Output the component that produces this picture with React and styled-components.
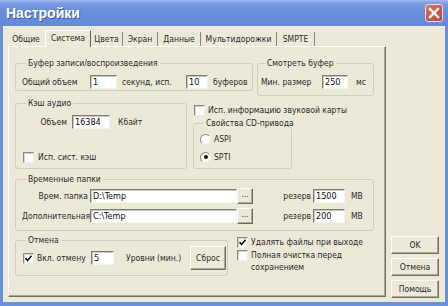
import React from 'react';
import styled, { createGlobalStyle } from 'styled-components';

const FONT = `"DejaVu Sans Condensed", "DejaVu Sans", "Liberation Sans", sans-serif`;

const GlobalStyle = createGlobalStyle`
  * { box-sizing: border-box; }
  html, body { margin: 0; padding: 0; background: #ece9d8; }
  body {
    font-family: ${FONT};
    font-stretch: condensed;
    font-size: 8.5px;
    color: #2b2b2b;
  }
`;

const Window = styled.div`
  width: 448px;
  height: 306px;
  display: flex;
  flex-direction: column;
  background: #6a8fdb;
`;

const TitleBar = styled.div`
  height: 26px;
  flex: none;
  display: flex;
  align-items: center;
  justify-content: space-between;
  padding: 0 5px 1px 6px;
  background: linear-gradient(#a3bdf0 0px, #7c9de4 3px, #6a8fdb 10px, #6589d8 100%);
`;

const Title = styled.span`
  font-family: "Liberation Sans", Arial, sans-serif;
  font-weight: bold;
  font-size: 14px;
  color: #fff;
  text-shadow: 1px 1px 0 #3a5ea8;
`;

const CloseBox = styled.div`
  width: 18px;
  height: 18px;
  border-radius: 3px;
  border: 1px solid #f2d6d0;
  background: linear-gradient(135deg, #d87a6c, #c4564a 60%, #b34a40);
  display: flex;
  align-items: center;
  justify-content: center;
`;

const Client = styled.div`
  flex: 1;
  margin: 0 3px 4px 3px;
  background: #ece9d8;
  display: flex;
  padding: 4px 0 0 5px;
`;

const Main = styled.div`
  width: 378px;
  display: flex;
  flex-direction: column;
`;

const TabStrip = styled.div`
  height: 16px;
  display: flex;
  align-items: flex-end;
`;

const Tab = styled.div`
  width: ${p => p.$w}px;
  height: ${p => (p.$active ? 17 : 14)}px;
  margin-bottom: ${p => (p.$active ? -1 : 0)}px;
  display: flex;
  align-items: center;
  justify-content: center;
  padding-bottom: ${p => (p.$active ? 2 : 0)}px;
  white-space: nowrap;
  background: #ece9d8;
  position: relative;
  z-index: ${p => (p.$active ? 1 : 0)};
  border-right: 1px solid ${p => (p.$sep ? '#85857a' : 'transparent')};
  ${p => p.$active && `
    border-top: 1px solid #ffffff;
    border-left: 1px solid #ffffff;
    border-right: 1px solid #5e5e56;
  `}
`;

const Panel = styled.div`
  height: 251px;
  border: 1px solid;
  border-color: #ffffff #716f64 #716f64 #ffffff;
  box-shadow: inset -1px -1px 0 #aca899;
  padding: 10px 0 0 6px;
  display: flex;
  flex-direction: column;
`;

const Row = styled.div`
  display: flex;
  align-items: ${p => p.$align || 'center'};
  height: ${p => (p.$h ? `${p.$h}px` : 'auto')};
  width: ${p => (p.$w ? `${p.$w}px` : 'auto')};
  flex: none;
  margin-top: ${p => p.$mt || 0}px;
  margin-left: ${p => p.$ml || 0}px;
`;

const Column = styled.div`
  display: flex;
  flex-direction: column;
  width: ${p => (p.$w ? `${p.$w}px` : 'auto')};
  margin-left: ${p => p.$ml || 0}px;
  margin-top: ${p => p.$mt || 0}px;
`;

const Group = styled.fieldset`
  margin: 0;
  margin-top: ${p => p.$mt || 0}px;
  min-width: 0;
  width: ${p => p.$w}px;
  height: ${p => p.$h}px;
  padding: ${p => p.$pt || 0}px 0 0 ${p => p.$pl || 6}px;
  border: 1px solid #d0cebf;
  border-radius: 3px;
`;

const Legend = styled.legend`
  padding: 0 2px;
  margin-left: 4px;
  line-height: 12px;
  font-size: 8.5px;
  white-space: nowrap;
  color: #2b2b2b;
`;

const Text = styled.span`
  display: inline-block;
  flex: none;
  white-space: nowrap;
  width: ${p => (p.$w ? `${p.$w}px` : 'auto')};
  text-align: ${p => (p.$right ? 'right' : 'left')};
  padding-left: ${p => p.$pl || 0}px;
  padding-right: ${p => p.$pr || 0}px;
  line-height: 12px;
`;

const Field = styled.div`
  flex: none;
  width: ${p => p.$w}px;
  height: 14px;
  background: #fff;
  border: 1px solid;
  border-color: #7f7d74 #f4f3ee #f4f3ee #7f7d74;
  box-shadow: inset 1px 1px 0 #c8c6bc;
  padding: 0 2px;
  line-height: 12px;
  font-size: 9px;
  color: #111;
  white-space: nowrap;
  overflow: hidden;
`;

const Button = styled.div`
  flex: none;
  width: ${p => p.$w}px;
  height: ${p => p.$h}px;
  display: flex;
  align-items: center;
  justify-content: center;
  background: #ece9d8;
  border: 1px solid;
  border-color: #ffffff #716f64 #716f64 #ffffff;
  box-shadow: inset -1px -1px 0 #aca899;
  font-size: ${p => p.$fs || 8.5}px;
  line-height: 1;
  color: #2b2b2b;
  padding-bottom: ${p => p.$pb || 0}px;
`;

const Box = styled.div`
  flex: none;
  width: 11px;
  height: 11px;
  margin-left: ${p => p.$ml || 0}px;
  margin-top: ${p => p.$mt || 0}px;
  background: #fff;
  border: 1px solid;
  border-color: #8d8b80 #f0efe8 #f0efe8 #8d8b80;
  box-shadow: inset 1px 1px 0 #d6d4ca;
  display: flex;
  align-items: center;
  justify-content: center;
`;

const RadioCircle = styled.div`
  flex: none;
  width: 11px;
  height: 11px;
  border-radius: 50%;
  background: #fff;
  border: 1px solid;
  border-color: #8d8b80 #eeede6 #eeede6 #8d8b80;
  display: flex;
  align-items: center;
  justify-content: center;
`;

const Dot = styled.div`
  width: 4px;
  height: 4px;
  border-radius: 50%;
  background: #111;
`;

const ButtonColumn = styled.div`
  width: 48px;
  margin-left: 5px;
  display: flex;
  flex-direction: column;
  justify-content: flex-end;
  gap: 4px;
  padding-bottom: 4px;
`;

const WrapText = styled.span`
  width: ${p => p.$w}px;
  margin-left: 3px;
  line-height: 12px;
`;

function CheckBox({ checked, ml, mt }) {
  return (
    <Box $ml={ml} $mt={mt}>
      {checked && (
        <svg width="7" height="7" viewBox="0 0 7 7">
          <path d="M0.5 3 L2.5 5.5 L6.5 0.8" fill="none" stroke="#111" strokeWidth="1.6" />
        </svg>
      )}
    </Box>
  );
}

function Radio({ checked }) {
  return <RadioCircle>{checked && <Dot />}</RadioCircle>;
}

const tabs = [
  { label: 'Общие', w: 37, sep: false },
  { label: 'Система', w: 46, active: true },
  { label: 'Цвета', w: 32, sep: true },
  { label: 'Экран', w: 35, sep: true },
  { label: 'Данные', w: 43, sep: true },
  { label: 'Мультидорожки', w: 76, sep: true },
  { label: 'SMPTE', w: 38, sep: true },
];

export default function App() {
  return (
    <>
      <GlobalStyle />
      <Window>
        <TitleBar>
          <Title>Настройки</Title>
          <CloseBox>
            <svg width="12" height="12" viewBox="0 0 12 12">
              <path d="M2 2 L10 10 M10 2 L2 10" stroke="#fff" strokeWidth="2.4" strokeLinecap="square" />
            </svg>
          </CloseBox>
        </TitleBar>
        <Client>
          <Main>
            <TabStrip>
              {tabs.map(t => (
                <Tab key={t.label} $w={t.w} $active={t.active} $sep={t.sep}>
                  {t.label}
                </Tab>
              ))}
            </TabStrip>
            <Panel>
              <Row $h={40} $align="flex-start">
                <Group $w={238} $h={34} $pt={6} $pl={6}>
                  <Legend>Буфер записи/воспроизведения</Legend>
                  <Row $h={14}>
                    <Text $w={68}>Общий объем</Text>
                    <Field $w={27}>1</Field>
                    <Text $w={69} $pl={5}>секунд, исп.</Text>
                    <Field $w={22}>10</Field>
                    <Text $pl={5}>буферов</Text>
                  </Row>
                </Group>
                <Column $ml={4}>
                  <Group $w={117} $h={39} $pt={6} $pl={3}>
                    <Legend>Смотреть буфер</Legend>
                    <Row $h={14}>
                      <Text $w={61}>Мин. размер</Text>
                      <Field $w={26}>250</Field>
                      <Text $pl={8}>мс</Text>
                    </Row>
                  </Group>
                </Column>
              </Row>

              <Row $align="flex-start">
                <Group $w={172} $h={72} $pt={6} $pl={6}>
                  <Legend>Кэш аудио</Legend>
                  <Row $h={14}>
                    <Text $w={50} $right $pr={5}>Объем</Text>
                    <Field $w={38}>16384</Field>
                    <Text $pl={8}>Кбайт</Text>
                  </Row>
                  <Row $h={12} $mt={22}>
                    <CheckBox ml={1} />
                    <Text $pl={4}>Исп. сист. кэш</Text>
                  </Row>
                </Group>
                <Column $ml={6} $w={99}>
                  <Row $h={12} $mt={7}>
                    <CheckBox ml={1} />
                    <Text $pl={3}>Исп. информацию звуковой карты</Text>
                  </Row>
                  <Group $w={99} $h={52} $pt={4} $pl={6} $mt={1}>
                    <Legend>Свойства CD-привода</Legend>
                    <Row $h={12}>
                      <Radio />
                      <Text $pl={3}>ASPI</Text>
                    </Row>
                    <Row $h={12} $mt={6}>
                      <Radio checked />
                      <Text $pl={3}>SPTI</Text>
                    </Row>
                  </Group>
                </Column>
              </Row>

              <Row $mt={4}>
                <Group $w={359} $h={58} $pt={3} $pl={6}>
                  <Legend>Временные папки</Legend>
                  <Row $h={16}>
                    <Text $w={68} $right $pr={2}>Врем. папка</Text>
                    <Field $w={147}>D:\Temp</Field>
                    <Button $w={16} $h={16} $fs={8} $pb={3}>...</Button>
                    <Text $w={60} $right $pr={2}>резерв</Text>
                    <Field $w={32}>1500</Field>
                    <Text $pl={6}>MB</Text>
                  </Row>
                  <Row $h={16} $mt={4}>
                    <Text $w={68} $right $pr={2}>Дополнительная</Text>
                    <Field $w={147}>C:\Temp</Field>
                    <Button $w={16} $h={16} $fs={8} $pb={3}>...</Button>
                    <Text $w={60} $right $pr={2}>резерв</Text>
                    <Field $w={32}>200</Field>
                    <Text $pl={6}>MB</Text>
                  </Row>
                </Group>
              </Row>

              <Row $mt={3} $align="flex-start">
                <Group $w={213} $h={42} $pt={0} $pl={6}>
                  <Legend>Отмена</Legend>
                  <Row $h={24}>
                    <Row $h={12} $w={69}>
                      <CheckBox ml={1} checked />
                      <Text $pl={3}>Вкл. отмену</Text>
                    </Row>
                    <Field $w={23}>5</Field>
                    <Text $w={76} $pl={12}>Уровни (мин.)</Text>
                    <Button $w={36} $h={24}>Сброс</Button>
                  </Row>
                </Group>
                <Column $ml={9} $mt={2}>
                  <Row $h={12}>
                    <CheckBox checked />
                    <Text $pl={3}>Удалять файлы при выходе</Text>
                  </Row>
                  <Row $mt={1} $align="flex-start">
                    <CheckBox mt={1} />
                    <WrapText $w={110}>Полная очистка перед сохранением</WrapText>
                  </Row>
                </Column>
              </Row>
            </Panel>
          </Main>
          <ButtonColumn>
            <Button $w={48} $h={18}>OK</Button>
            <Button $w={48} $h={18}>Отмена</Button>
            <Button $w={48} $h={18}>Помощь</Button>
          </ButtonColumn>
        </Client>
      </Window>
    </>
  );
}
